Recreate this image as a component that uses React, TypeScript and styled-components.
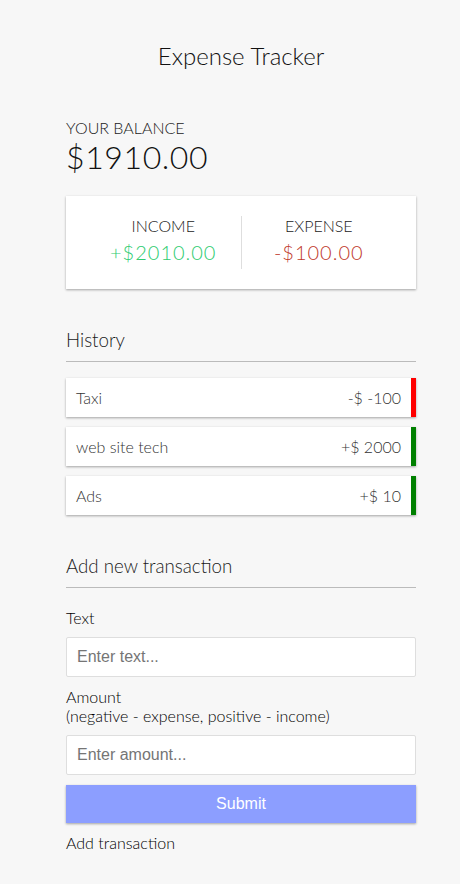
import React from "react";
import styled, { createGlobalStyle } from "styled-components";

const GlobalStyle = createGlobalStyle`
  * { box-sizing: border-box; }
  body {
    margin: 0;
    background-color: #f7f7f7;
    font-family: Lato, "Noto Sans", sans-serif;
    font-weight: 300;
    color: #1a1a1a;
  }
`;

const shadow = "0 1px 3px rgba(0, 0, 0, 0.12), 0 1px 2px rgba(0, 0, 0, 0.24)";

const Container = styled.div`
  width: 350px;
  margin: 41px 0 30px 66px;
`;

const Title = styled.h2`
  margin: 0;
  font-size: 24px;
  font-weight: 300;
  text-align: center;
  color: #111;
`;

const BalanceLabel = styled.h4`
  margin: 48px 0 0;
  font-size: 16px;
  font-weight: 300;
  text-transform: uppercase;
`;

const Balance = styled.h1`
  margin: 0;
  font-size: 32px;
  font-weight: 300;
  letter-spacing: 0.6px;
  color: #111;
`;

const IncExp = styled.div`
  display: flex;
  margin: 20px 0;
  padding: 20px;
  background-color: #fff;
  box-shadow: ${shadow};
`;

const IncExpCol = styled.div`
  flex: 1;
  text-align: center;
  &:first-of-type {
    border-right: 1px solid #dedede;
  }
`;

const ColLabel = styled.h4`
  margin: 0;
  font-size: 16px;
  font-weight: 300;
  text-transform: uppercase;
`;

const Money = styled.p<{ $tone: "plus" | "minus" }>`
  margin: 5px 0;
  font-size: 20px;
  letter-spacing: 1px;
  color: ${(p) => (p.$tone === "plus" ? "#2ecc71" : "#c0392b")};
`;

const SectionTitle = styled.h3`
  margin: 40px 0 10px;
  padding-bottom: 10px;
  border-bottom: 1px solid #bbb;
  font-size: 18.72px;
  font-weight: 300;
`;

const List = styled.ul`
  list-style: none;
  margin: 16px 0 0;
  padding: 0;
`;

const Item = styled.li<{ $tone: "plus" | "minus" }>`
  display: flex;
  justify-content: space-between;
  margin: 10px 0;
  padding: 10px;
  background-color: #fff;
  color: #333;
  box-shadow: ${shadow};
  border-right: 5px solid ${(p) => (p.$tone === "plus" ? "green" : "red")};
`;

const FormControl = styled.div``;

const Label = styled.label`
  display: inline-block;
  margin: 10px 0;
  color: #000;
`;

const Input = styled.input`
  display: block;
  width: 100%;
  padding: 10px;
  border: 1px solid #dedede;
  border-radius: 2px;
  font-family: "Liberation Sans", Arial, sans-serif;
  font-size: 16px;
  &::placeholder {
    color: #757575;
  }
`;

const Button = styled.button`
  display: block;
  width: 100%;
  margin: 10px 0;
  padding: 10px;
  border: 0;
  background-color: #8c9eff;
  color: #fff;
  font-family: "Liberation Sans", Arial, sans-serif;
  font-size: 16px;
  box-shadow: ${shadow};
  cursor: pointer;
`;

const Footnote = styled.p`
  margin: 0;
  color: #000;
`;

const transactions: { text: string; amount: string; tone: "plus" | "minus" }[] = [
  { text: "Taxi", amount: "-$ -100", tone: "minus" },
  { text: "web site tech", amount: "+$ 2000", tone: "plus" },
  { text: "Ads", amount: "+$ 10", tone: "plus" },
];

export default function App() {
  return (
    <>
      <GlobalStyle />
      <Container>
        <Title>Expense Tracker</Title>

        <BalanceLabel>Your Balance</BalanceLabel>
        <Balance>$1910.00</Balance>

        <IncExp>
          <IncExpCol>
            <ColLabel>Income</ColLabel>
            <Money $tone="plus">+$2010.00</Money>
          </IncExpCol>
          <IncExpCol>
            <ColLabel>Expense</ColLabel>
            <Money $tone="minus">-$100.00</Money>
          </IncExpCol>
        </IncExp>

        <SectionTitle>History</SectionTitle>
        <List>
          {transactions.map((t) => (
            <Item key={t.text} $tone={t.tone}>
              {t.text}
              <span>{t.amount}</span>
            </Item>
          ))}
        </List>

        <SectionTitle>Add new transaction</SectionTitle>
        <form onSubmit={(e) => e.preventDefault()}>
          <FormControl>
            <Label htmlFor="text">Text</Label>
            <Input type="text" id="text" placeholder="Enter text..." />
          </FormControl>
          <FormControl>
            <Label htmlFor="amount">
              Amount <br />
              (negative - expense, positive - income)
            </Label>
            <Input type="number" id="amount" placeholder="Enter amount..." />
          </FormControl>
          <Button>Submit</Button>
        </form>
        <Footnote>Add transaction</Footnote>
      </Container>
    </>
  );
}
